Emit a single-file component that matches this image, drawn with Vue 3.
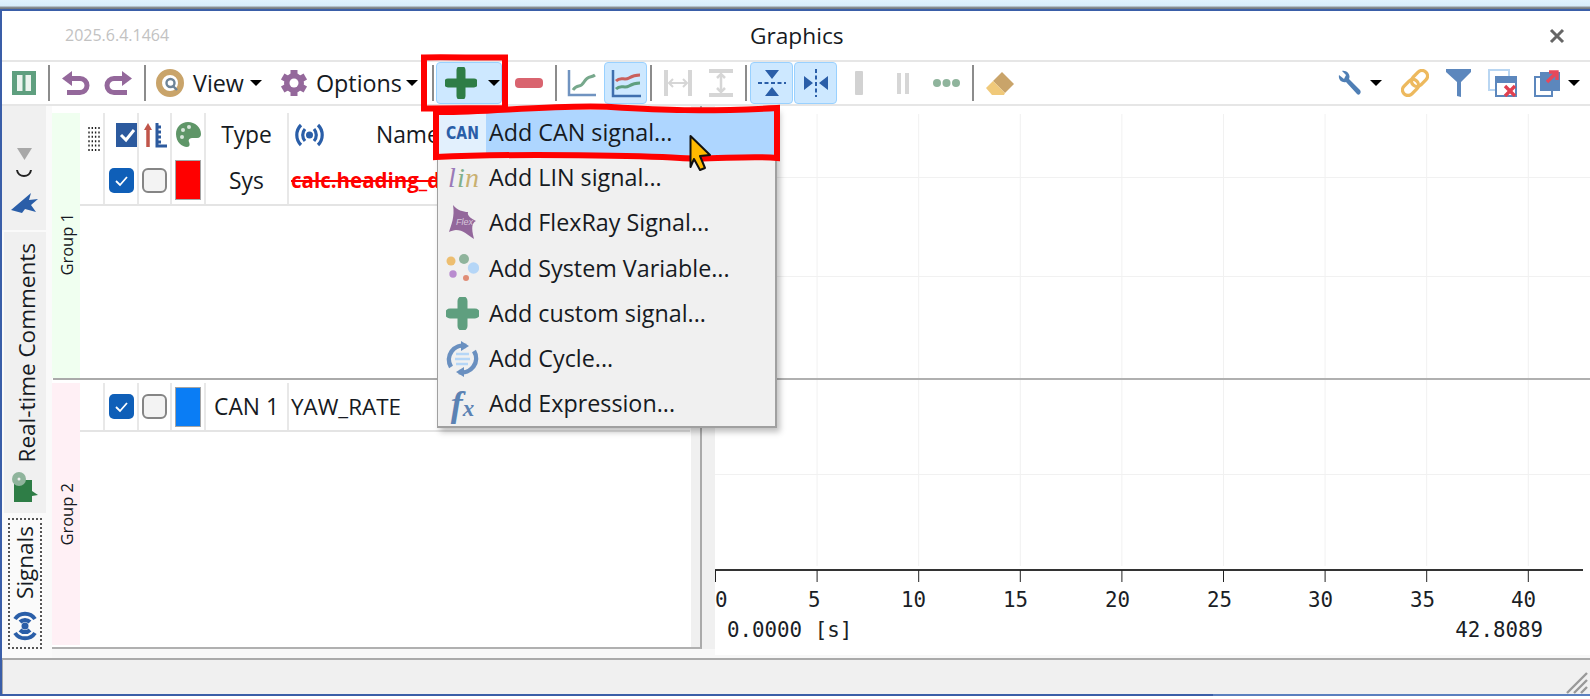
<script setup>
const ticks = [0, 5, 10, 15, 20, 25, 30, 35, 40].map((v, i) => ({
  v,
  x: 101.6 * i + 0.5,
  lx: [0, 93, 186, 288, 390, 492, 593, 695, 796][i]
}))
const gridY = [71, 170, 368]
const items = ['Add CAN signal...', 'Add LIN signal...', 'Add FlexRay Signal...', 'Add System Variable...', 'Add custom signal...', 'Add Cycle...', 'Add Expression...']
</script>

<template>
  <div class="page">
    <div class="topstrip"></div>
    <div class="window">
      <header class="title">
        <span class="version">2025.6.4.1464</span>
        <span class="title-text">Graphics</span>
        <svg class="close" width="16" height="16" viewBox="0 0 16 16"><path d="M2 2L14 14M14 2L2 14" stroke="#666" stroke-width="3" /></svg>
      </header>

      <nav class="toolbar">
        <svg width="24" height="24" viewBox="0 0 24 24"><rect width="24" height="24" fill="#5f9f7f" /><rect x="5" y="4" width="5.5" height="16" fill="#edf4ef" /><rect x="13.5" y="4" width="5.5" height="16" fill="#edf4ef" /></svg>
        <i class="sep s12"></i>
        <svg class="m12" width="28" height="27" viewBox="0 0 28 27"><path d="M8 8.5H18a7 7 0 0 1 0 14H5" fill="none" stroke="#94689b" stroke-width="5" /><path d="M0 8.5L10 1V16Z" fill="#94689b" /></svg>
        <svg class="m14" width="28" height="27" viewBox="0 0 28 27"><path d="M20 8.5H10a7 7 0 0 0 0 14H23" fill="none" stroke="#94689b" stroke-width="5" /><path d="M28 8.5L18 1V16Z" fill="#94689b" /></svg>
        <i class="sep s12"></i>
        <svg class="m10" width="28" height="28" viewBox="0 0 28 28"><circle cx="14" cy="14" r="11" fill="none" stroke="#c9a46a" stroke-width="6" /><circle cx="14.5" cy="14" r="4" fill="none" stroke="#6d8397" stroke-width="2.4" /><path d="M17 17L21 21" stroke="#6d8397" stroke-width="2.4" /></svg>
        <span class="tb-text view">View</span>
        <i class="caret c7"></i>
        <svg class="m18" width="28" height="28" viewBox="0 0 28 28"><g stroke="#94689b" stroke-width="7"><path d="M14 1V27" /><path d="M2.7 7.5L25.3 20.5" /><path d="M2.7 20.5L25.3 7.5" /></g><circle cx="14" cy="14" r="10" fill="#94689b" /><circle cx="14" cy="14" r="4.5" fill="#fff" /></svg>
        <span class="tb-text options">Options</span>
        <i class="caret c6"></i>
        <i class="sep s14"></i>
        <div class="tool-btn add">
          <svg width="32" height="32" viewBox="0 0 32 32"><path d="M16 3V29M3 16H29" stroke="#2e7d46" stroke-width="9" stroke-linecap="round" /></svg>
          <i class="caret c11"></i>
        </div>
        <svg class="m13" width="28" height="10" viewBox="0 0 28 10"><rect width="28" height="10" rx="4" fill="#d9646f" /></svg>
        <i class="sep s12"></i>
        <svg class="m10" width="29" height="28" viewBox="0 0 29 28"><path d="M2 1V26H29" fill="none" stroke="#7093c0" stroke-width="2.5" /><path d="M6 21C11 14 13 20 17 13S24 9 28 6" fill="none" stroke="#77a88c" stroke-width="3" /></svg>
        <div class="tool-btn chart">
          <svg width="30" height="29" viewBox="0 0 30 29"><path d="M2 1V27H30" fill="none" stroke="#3f6fae" stroke-width="2.5" /><path d="M5 12C10 7 13 12 18 9S25 6 29 6" fill="none" stroke="#c9605c" stroke-width="3" /><path d="M5 20C10 15 13 20 18 17S25 14 29 14" fill="none" stroke="#5f9f7f" stroke-width="3" /></svg>
        </div>
        <i class="sep s4"></i>
        <svg class="m12" width="28" height="26" viewBox="0 0 28 26"><g fill="none" stroke="#d6d6d6"><path d="M2 0V26M26 0V26" stroke-width="4" /><path d="M6 13H22" stroke-width="2" /><path d="M9 9L5 13L9 17M19 9L23 13L19 17" stroke-width="2" /></g></svg>
        <svg class="m17" width="24" height="28" viewBox="0 0 24 28"><g fill="none" stroke="#d6d6d6"><path d="M0 2H24M0 26H24" stroke-width="4" /><path d="M12 6V22" stroke-width="2.5" /><path d="M8 9L12 5L16 9M8 19L12 23L16 19" stroke-width="2.5" /></g></svg>
        <i class="sep s13"></i>
        <div class="tool-btn split s-first">
          <svg width="28" height="30" viewBox="0 0 28 30"><path d="M0 15H28" stroke="#2a5ea8" stroke-width="2" stroke-dasharray="4 2.5" /><path d="M7 2H21L14 11ZM7 28H21L14 19Z" fill="#2a5ea8" /></svg>
        </div>
        <div class="tool-btn split s-second">
          <svg width="28" height="30" viewBox="0 0 28 30"><path d="M14 1V29" stroke="#2a5ea8" stroke-width="2" stroke-dasharray="4 2.5" /><path d="M2 8V22L11 15ZM26 8V22L17 15Z" fill="#2a5ea8" /></svg>
        </div>
        <svg class="m18" width="8" height="24" viewBox="0 0 8 24"><rect width="8" height="24" rx="1" fill="#d2d2d2" /></svg>
        <svg class="m34" width="12" height="21" viewBox="0 0 12 21"><rect width="4" height="21" fill="#d6d6d6" /><rect x="8" width="4" height="21" fill="#d6d6d6" /></svg>
        <svg class="m24" width="27" height="8" viewBox="0 0 27 8"><circle cx="4" cy="4" r="4" fill="#8fb49c" /><circle cx="13.5" cy="4" r="4" fill="#8fb49c" /><circle cx="23" cy="4" r="4" fill="#8fb49c" /></svg>
        <i class="sep s12"></i>
        <svg class="m12" width="29" height="24" viewBox="0 0 29 24"><path d="M16 1L28 13L19 22L7 10Z" fill="#c9a46a" /><path d="M7 10L19 22L18 24H6L0 17Z" fill="#f0c97a" /></svg>

        <div class="tool-right">
          <svg width="24" height="26" viewBox="0 0 24 26"><path d="M2 5C1 10 5 13 9 12L20 24C22 26 25 23 23 20L12 9C14 5 10 0 5 1L9 5L7 9L2 5Z" fill="#4f7fb5" /></svg>
          <i class="caret c9"></i>
          <svg class="m19" width="28" height="28" viewBox="0 0 28 28"><g fill="none" stroke="#edb95e" stroke-width="3.4"><rect x="9.5" y="4" width="18" height="11" rx="5.5" transform="rotate(-45 18.5 9.500)" /><rect x="0.5" y="13" width="18" height="11" rx="5.5" transform="rotate(-45 9.500 18.500)" /></g></svg>
          <svg class="m17" width="25" height="28" viewBox="0 0 25 28"><path d="M0 0H25V3L15 13V28L11 27V13L0 3Z" fill="#5c87bd" /></svg>
          <svg class="m17" width="29" height="28" viewBox="0 0 29 28"><rect x="1" y="1" width="20" height="20" fill="none" stroke="#b9d6f2" stroke-width="2" /><rect x="8" y="8" width="20" height="19" fill="#fff" stroke="#5c87bd" stroke-width="2" /><rect x="8" y="8" width="20" height="6" fill="#5c87bd" /><path d="M17 17L27 27M27 17L17 27" stroke="#e04050" stroke-width="3.400" /></svg>
          <svg class="m17" width="26" height="28" viewBox="0 0 26 28"><rect x="1" y="8" width="17" height="19" fill="#fff" stroke="#5c87bd" stroke-width="2" /><rect x="6" y="3" width="20" height="19" fill="#5c87bd" /><path d="M13 13L21 5M15 3H23V11" fill="none" stroke="#e8485a" stroke-width="3.400" /></svg>
          <i class="caret c8"></i>
        </div>
      </nav>

      <main class="body">
        <aside class="tabs">
          <div class="tab-top">
            <svg width="15" height="12" viewBox="0 0 15 12"><path d="M0 0H15L7.500 12Z" fill="#a8a8a8" /></svg>
            <svg class="smile" width="18" height="8" viewBox="0 0 18 8"><path d="M2 0C3 8 15 8 16 0" fill="none" stroke="#222" stroke-width="2" /></svg>
            <svg class="arrow" width="27" height="21" viewBox="0 0 27 21"><path d="M0 17L20 0L18 7L27 6L20 12L25 19L14 16L11 20Z" fill="#2a5ea8" /></svg>
          </div>
          <div class="tab-mid">
            <span class="vtext shifted">Real-time Comments</span>
            <svg width="27" height="30" viewBox="0 0 27 30"><path d="M2 8H20V19L26 23L20 24V30H2Z" fill="#2e7d46" /><circle cx="7" cy="7" r="7" fill="#8fb49c" /><circle cx="7" cy="7" r="1.500" fill="#eee" /></svg>
          </div>
          <div class="tab-bottom">
            <div class="tab-active">
              <span class="vtext">Signals</span>
              <svg width="24" height="32" viewBox="0 0 24 32"><g fill="none" stroke="#2a5ea8" stroke-width="4"><path d="M2 9A12 12 0 0 1 22 9" /><path d="M7 12A7 7 0 0 1 17 12" /><path d="M2 23A12 12 0 0 0 22 23" /><path d="M7 20A7 7 0 0 0 17 20" /></g><circle cx="12" cy="16" r="3.500" fill="#2a5ea8" /></svg>
            </div>
          </div>
        </aside>

        <section class="pane">
          <div class="group g1">
            <div class="strip green"><span class="gtext">Group 1</span></div>
            <div class="gbody">
              <div class="head-row">
                <svg class="drag" width="12" height="24" viewBox="0 0 12 24"><g stroke="#222" stroke-width="1.400" stroke-dasharray="2 2.400"><path d="M1 0V24" /><path d="M4.300 0V24" /><path d="M7.600 0V24" /><path d="M11 0V24" /></g></svg>
                <div class="cols">
                  <div class="c c1"><span class="hcheck"><svg width="23" height="24" viewBox="0 0 23 24"><rect width="23" height="24" fill="#2c5a9e" /><path d="M5 12L10 17L18 7" fill="none" stroke="#fff" stroke-width="3" /></svg></span></div>
                  <div class="c c2"><svg width="24" height="26" viewBox="0 0 24 26"><path d="M5 25V5" stroke="#c0554a" stroke-width="3.500" /><path d="M1 8L5 1L9 8Z" fill="#c0554a" /><path d="M14 1V24H24M14 5H18M14 10H18M14 15H18M14 20H18" fill="none" stroke="#2c5a9e" stroke-width="3" /></svg></div>
                  <div class="c c3"><svg width="25" height="25" viewBox="0 0 25 25"><path d="M12 0C5 0 0 5 0 12C0 20 6 25 11 25C14 25 14 22 13 20C12 17 14 16 17 16H21C24 16 25 14 25 12C25 5 19 0 12 0Z" fill="#5f9668" /><circle cx="7" cy="8" r="2" fill="#d9e6dc" /><circle cx="13" cy="5" r="2" fill="#d9e6dc" /><circle cx="6" cy="15" r="2" fill="#d9e6dc" /></svg></div>
                  <div class="c c4 txt">Type</div>
                  <div class="c c5"><svg class="sigh" width="31" height="24" viewBox="0 0 31 24"><g fill="none" stroke="#2a5ea8" stroke-width="3.200"><path d="M7 2A14 14 0 0 0 7 22" /><path d="M11 6A9 9 0 0 0 11 18" /><path d="M24 2A14 14 0 0 1 24 22" /><path d="M20 6A9 9 0 0 1 20 18" /></g><circle cx="15.500" cy="12" r="3.500" fill="#2a5ea8" /></svg><span class="name-head">Name</span></div>
                </div>
              </div>
              <div class="row r1">
                <div class="cols">
                  <div class="c c1"><span class="check"><svg width="25" height="25" viewBox="0 0 25 25"><path d="M7 13L11 17L18 9" fill="none" stroke="#fff" stroke-width="1.800" /></svg></span></div>
                  <div class="c c2"><span class="uncheck"></span></div>
                  <div class="c c3"><span class="swatch red"></span></div>
                  <div class="c c4 txt">Sys</div>
                  <div class="c c5 struck">calc.heading_d</div>
                </div>
              </div>
            </div>
          </div>
          <div class="divider"></div>
          <div class="group g2">
            <div class="strip pink"><span class="gtext">Group 2</span></div>
            <div class="gbody">
              <div class="row r2">
                <div class="cols">
                  <div class="c c1"><span class="check"><svg width="25" height="25" viewBox="0 0 25 25"><path d="M7 13L11 17L18 9" fill="none" stroke="#fff" stroke-width="1.800" /></svg></span></div>
                  <div class="c c2"><span class="uncheck"></span></div>
                  <div class="c c3"><span class="swatch blue"></span></div>
                  <div class="c c4 txt">CAN 1</div>
                  <div class="c c5 yaw">YAW_RATE</div>
                </div>
              </div>
            </div>
          </div>
        </section>

        <div class="splitter"></div>

        <svg class="plot" width="875" height="549" viewBox="0 0 875 549">
          <g stroke="#f1f1f1" stroke-width="1">
            <line v-for="t in ticks.slice(1)" :key="t.v" :x1="t.x" :x2="t.x" y1="8" y2="460" />
            <line v-for="y in gridY" :key="y" x1="0" x2="875" :y1="y + 0.5" :y2="y + 0.5" />
          </g>
          <rect x="0" y="272" width="875" height="2" fill="#b0b0b0" />
          <rect x="0" y="463" width="868" height="2" fill="#333" />
          <g stroke="#222" stroke-width="1">
            <line v-for="t in ticks" :key="t.v" :x1="t.x" :x2="t.x" y1="464" y2="476" />
          </g>
          <g class="mono">
            <text v-for="t in ticks" :key="t.v" :x="t.lx" y="501">{{ t.v }}</text>
            <text x="12" y="531">0.0000 [s]</text>
            <text x="828" y="531" text-anchor="end">42.8089</text>
          </g>
        </svg>
      </main>

      <footer class="status">
        <svg class="grip" width="22" height="22" viewBox="0 0 22 22"><path d="M1 21L21 1M8 21L21 8M15 21L21 15" stroke="#999" stroke-width="2.400" /></svg>
      </footer>
    </div>
    <div class="bottom-edge"><i></i></div>

    <!-- popup menu over the toolbar and the table -->
    <div class="menu">
      <div v-for="(label, i) in items" :key="label" class="item" :class="{ on: i === 0 }">
        <div class="m-icon">
          <span v-if="i === 0" class="can">CAN</span>
          <svg v-else-if="i === 1" width="34" height="36" viewBox="0 0 34 36"><text class="lin" y="27"><tspan x="2" fill="#9a7ab8">l</tspan><tspan x="11" fill="#7fb08c">i</tspan><tspan x="19" fill="#c9b070">n</tspan></text></svg>
          <svg v-else-if="i === 2" width="30" height="36" viewBox="0 0 30 36"><path d="M5 0C9 5 15 7 20 7C19 11 23 13 28 16C24 18 23 22 26 34C20 30 15 25 8 25C6 25 3 26 1 27C3 20 7 12 5 0Z" fill="#93679b" /><text class="flex" x="8" y="20">Flex</text></svg>
          <svg v-else-if="i === 3" width="33" height="30" viewBox="0 0 33 30"><circle cx="5" cy="7" r="4.500" fill="#edbe70" /><circle cx="18" cy="5" r="5" fill="#8fb49c" /><circle cx="27.500" cy="14" r="5.700" fill="#b5d6f7" /><circle cx="7" cy="20" r="3.700" fill="#b98ccf" /><circle cx="20" cy="24" r="3" fill="#e08d76" /></svg>
          <svg v-else-if="i === 4" width="33" height="33" viewBox="0 0 33 33"><path d="M16.500 4V29M4 16.500H29" stroke="#5f9f7f" stroke-width="10" stroke-linecap="round" /></svg>
          <svg v-else-if="i === 5" width="33" height="36" viewBox="0 0 33 36"><g fill="none" stroke="#6a90c0" stroke-width="4.500"><path d="M5 26A14 14 0 0 1 20 5" /><path d="M28 10A14 14 0 0 1 13 31" /></g><path d="M15 0L23 5L15 10ZM18 36L10 31L18 26Z" fill="#6a90c0" /><path d="M10 13H23M9 18H24M10 23H22" stroke="#b5d6f7" stroke-width="2.400" /></svg>
          <span v-else class="fx"><b>f</b><em>x</em></span>
        </div>
        <span class="m-label">{{ label }}</span>
      </div>
    </div>

    <svg class="marks" width="1590" height="699" viewBox="0 0 1590 699">
      <path d="M424 57.500C450 57 480 58 505 57.500V108C480 108.500 450 108 424 108.500Z" fill="none" stroke="#f00" stroke-width="6" />
      <path d="M436 112C480 113 560 104 611 107S700 112 777 108V158C750 155 710 160 680 158S520 153 436 157Z" fill="none" stroke="#f00" stroke-width="6" />
      <path d="M690.500 136L710 155L700 156L705 168L700 170L694 159L690.500 167Z" fill="#ffb900" stroke="#111" stroke-width="2" stroke-linejoin="round" />
    </svg>
  </div>
</template>

<style>
html, body { margin: 0; background: #fff; }
</style>

<style scoped>
.page {
  position: relative;
  width: 1590px;
  height: 699px;
  overflow: hidden;
  font-family: "Open Sans", "Noto Sans", sans-serif;
  color: #161a22;
}
.topstrip { height: 9px; background: linear-gradient(#dff1fc 0, #d6ecfa 6px, #8f959a 7px, #6f7478 9px); }
.window {
  height: 683px;
  border-top: 2px solid #3a5ea8;
  border-left: 2px solid #3a5ea8;
  display: flex;
  flex-direction: column;
  background: #fff;
}
.title { height: 49px; display: flex; align-items: center; position: relative; flex: none; }
.version { margin-left: 63px; margin-top: -2px; font-size: 16px; color: #c2c2c2; }
.title-text { position: absolute; left: 748px; top: 10px; font-size: 22.700px; line-height: 30px; }
.close { position: absolute; left: 1547px; top: 17px; }

.toolbar {
  height: 42px;
  flex: none;
  display: flex;
  align-items: center;
  padding-left: 10px;
  border-top: 2px solid #e6e6e6;
  border-bottom: 2px solid #e6e6e6;
}
.sep { display: block; width: 2px; height: 36px; background: #8c8c8c; flex: none; }
.s4 { margin-left: 3px; } .s12 { margin-left: 12px; } .s13 { margin-left: 12px; } .s14 { margin-left: 14px; }
.toolbar svg { flex: none; }
.m10 { margin-left: 10px; } .m12 { margin-left: 12px; } .m13 { margin-left: 13px; } .m14 { margin-left: 14px; }
.m17 { margin-left: 17px; } .m18 { margin-left: 18px; } .m19 { margin-left: 19px; } .m24 { margin-left: 24px; } .m34 { margin-left: 34px; }
.tb-text { font-size: 23.300px; flex: none; margin-left: 9px; }
.view { width: 50px; } .options { width: 84px; margin-left: 8px; }
.caret { display: block; flex: none; width: 0; height: 0; border-left: 6px solid transparent; border-right: 6px solid transparent; border-top: 6px solid #000; }
.c6 { margin-left: 6px; } .c7 { margin-left: 7px; } .c8 { margin-left: 8px; } .c9 { margin-left: 9px; } .c11 { margin-left: 11px; }
.tool-btn {
  display: flex;
  align-items: center;
  justify-content: center;
  box-sizing: border-box;
  height: 42px;
  flex: none;
  background: #cde8ff;
  border: 1px solid #99d1ff;
  border-radius: 4px;
}
.add { width: 66px; margin-left: 2px; justify-content: flex-start; padding-left: 8px; }
.chart { width: 43px; margin-left: 8px; }
.split { width: 43px; }
.s-first { margin-left: 3px; }
.s-second { margin-left: 1px; }
.tool-right { margin-left: auto; margin-right: 10px; display: flex; align-items: center; }

.body { flex: 1; min-height: 0; display: flex; background: #f8f8f8; }
.tabs { width: 50px; flex: none; display: flex; flex-direction: column; background: #fafafa; }
.tab-top {
  width: 44px;
  height: 126px;
  background: #f0f0f0;
  display: flex;
  flex-direction: column;
  align-items: center;
  border-bottom: 2px solid #fafafa;
  flex: none;
  box-sizing: border-box;
}
.tab-top > svg:first-child { margin-top: 42px; }
.smile { margin-top: 10px; }
.arrow { margin-top: 15px; }
.tab-mid {
  width: 42px;
  margin-left: 2px;
  height: 281px;
  flex: none;
  box-sizing: border-box;
  background: #f0f0f0;
  display: flex;
  flex-direction: column;
  align-items: center;
  padding-top: 11px;
  gap: 9px;
}
.vtext {
  writing-mode: vertical-rl;
  transform: rotate(180deg);
  font-size: 22.500px;
  line-height: 24px;
  white-space: nowrap;
}
.shifted { margin-left: 4px; }
.tab-bottom { padding: 5px 0 0 6px; }
.tab-active {
  box-sizing: border-box;
  width: 34px;
  height: 131px;
  border: 2px dotted #555;
  display: flex;
  flex-direction: column;
  align-items: center;
  justify-content: space-between;
  padding: 6px 0 5px;
}
.pane {
  width: 650px;
  height: 543px;
  flex: none;
  box-sizing: border-box;
  padding-top: 7px;
  background: linear-gradient(to right, #fff 639px, #f0f0f0 639px);
  border-right: 2px solid #aaa;
  border-bottom: 2px solid #b0b0b0;
  display: flex;
  flex-direction: column;
}
.group { display: flex; flex: none; }
.g1 { height: 265px; }
.g2 { height: 262px; margin-top: 3px; }
.divider { height: 2px; background: #aaa; flex: none; margin-left: 1px; }
.strip { width: 28px; display: flex; align-items: center; justify-content: center; flex: none; }
.green { background: #f0fff0; }
.pink { background: #fff0f5; }
.g1 .gtext { margin-top: -2px; }
.gtext {
  writing-mode: vertical-rl;
  transform: rotate(180deg);
  font-size: 16.500px;
  white-space: nowrap;
}
.gbody { flex: 1; min-width: 0; padding-right: 10px; }
.head-row { height: 43px; position: relative; display: flex; align-items: stretch; padding-left: 23px; }
.drag { position: absolute; left: 8px; top: 14px; }
.row { padding-left: 23px; }
.r1 { height: 48px; border-bottom: 2px solid #e4e4e4; }
.r2 { height: 47px; border-bottom: 2px solid #e4e4e4; }
.head-row .cols, .row .cols { height: 100%; }
.cols { display: flex; align-items: stretch; flex: 1; }
.c { display: flex; align-items: center; justify-content: center; flex: none; box-sizing: border-box; border-left: 2px solid #e8e8e8; }
.c1 { width: 34px; }
.c2 { width: 33px; }
.c3 { width: 34px; }
.c4 { width: 83px; }
.c5 { flex: 1; justify-content: flex-start; padding-left: 2px; min-width: 0; position: relative; }
.txt { font-size: 22.800px; }
.hcheck { display: block; margin-left: 12px; height: 24px; }
.sigh { margin-left: 3px; }
.name-head { margin-left: 51px; font-size: 22.800px; }
.check { display: block; width: 25px; height: 25px; border-radius: 5px; background: #0f5fb8; }
.uncheck { display: block; box-sizing: border-box; width: 25px; height: 25px; border-radius: 6px; background: #f3f3f3; border: 2px solid #858585; }
.swatch { display: block; box-sizing: border-box; width: 26px; height: 40px; border: 1px solid #a5a5a5; }
.red { background: #f00; }
.blue { background: #0a7df5; }
.struck { color: #f00; font-weight: 700; font-size: 20.500px; text-decoration: line-through; white-space: nowrap; overflow: hidden; }
.yaw { font-size: 22.400px; }
.splitter { width: 13px; height: 543px; background: #f0f0f0; flex: none; }
.plot { flex: none; background: #fff; display: block; }
.mono text { font-family: "DejaVu Sans Mono", monospace; font-size: 20.800px; fill: #1a1e26; }
.status {
  height: 36px;
  flex: none;
  box-sizing: border-box;
  background: #f0f0f0;
  border-top: 2px solid #aaa;
  border-left: 1px solid #aaa;
  position: relative;
}
.grip { position: absolute; right: 2px; bottom: 0; }
.bottom-edge { height: 2px; background: #5a7fbf; position: relative; }
.bottom-edge i { display: block; width: 1213px; height: 2px; background: #3a5ea8; }

.menu {
  position: absolute;
  left: 437px;
  top: 108px;
  box-sizing: border-box;
  width: 340px;
  height: 320px;
  padding: 1px 1px 0;
  background: #f0f0f0;
  border: 1px solid #a0a0a0;
  border-right-width: 2px;
  border-bottom-width: 2px;
  box-shadow: 3px 4px 6px rgba(0, 0, 0, 0.25);
}
.item { display: flex; align-items: center; height: 45.300px; }
.on { background: linear-gradient(to right, #e2f0fd 47px, #aed6ff 47px); }
.m-icon { width: 47px; display: flex; align-items: center; justify-content: center; flex: none; }
.m-label { font-size: 23.300px; margin-left: 3px; margin-top: -2px; white-space: nowrap; }
.can { font-family: "DejaVu Sans", sans-serif; font-weight: 700; font-size: 14px; color: #2a5ea8; transform: scaleY(1.200); }
.lin { font-family: "Liberation Serif", serif; font-style: italic; font-size: 28px; }
.flex { font-family: "Liberation Sans", sans-serif; font-style: italic; font-size: 9px; fill: #d9c8dc; }
.fx { font-family: "Liberation Serif", serif; color: #5b82b3; font-style: italic; }
.fx b { font-size: 36px; }
.fx em { font-size: 23px; font-weight: 700; }
.marks { position: absolute; left: 0; top: 0; pointer-events: none; }
</style>
